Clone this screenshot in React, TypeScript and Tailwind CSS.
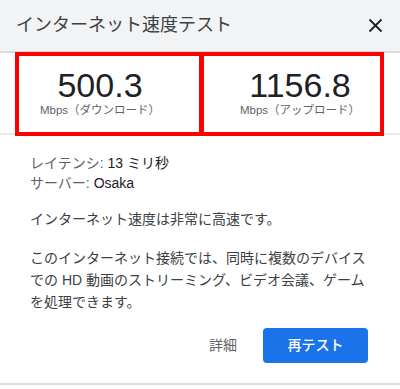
import React from 'react';

const font = { fontFamily: '"Liberation Sans", "Noto Sans CJK JP", sans-serif' };

function SpeedCell({ value, label }: { value: string; label: string }) {
  return (
    <div className="flex flex-col items-center pt-[15px]">
      <div className="text-[34px] leading-[34px] text-[#202124]">{value}</div>
      <div className="mt-[1px] text-[11.5px] leading-[14px] text-[#5f6368]">{label}</div>
    </div>
  );
}

export default function App() {
  return (
    <div className="w-[400px] h-[389px] bg-white" style={font}>
      <div className="h-[385px] border-b-2 border-[#dadce0]">
        <header className="h-[53px] bg-[#f1f3f4] border-b-2 border-[#dadce0] flex items-center justify-between pl-4 pr-[17px]">
          <h1 className="text-[18px] text-[#3c4043]">インターネット速度テスト</h1>
          <svg width="15" height="15" viewBox="0 0 15 15" className="text-[#202124]">
            <path d="M1.5 1.5 L13.5 13.5 M13.5 1.5 L1.5 13.5" stroke="currentColor" strokeWidth="1.8" />
          </svg>
        </header>

        <section className="relative h-[82px] border-b-2 border-[#e8eaed] grid grid-cols-2">
          <SpeedCell value="500.3" label="Mbps（ダウンロード）" />
          <SpeedCell value="1156.8" label="Mbps（アップロード）" />
          {/* red annotation frames */}
          <div className="absolute -top-[1px] left-[15px] w-[369px] h-[84px] border-4 border-[#ff0000] flex pointer-events-none">
            <div className="w-[180px]" />
            <div className="w-[5px] bg-[#ff0000]" />
            <div className="flex-1" />
          </div>
        </section>

        <div className="px-[30px] pt-[18px] text-[14px] text-[#3c4043]">
          <div className="leading-[20px]">
            <span className="text-[#5f6368]">レイテンシ: </span>
            <span className="text-[#202124]">13 ミリ秒</span>
          </div>
          <div className="leading-[20px]">
            <span className="text-[#5f6368]">サーバー: </span>
            <span className="text-[#202124]">Osaka</span>
          </div>
          <p className="mt-[16px] leading-[20px]">インターネット速度は非常に高速です。</p>
          <p className="mt-[18px] leading-[22px]">
            このインターネット接続では、同時に複数のデバイスでの HD 動画のストリーミング、ビデオ会議、ゲームを処理できます。
          </p>
        </div>

        <div className="mt-[15px] flex items-center justify-end pr-[32px] gap-[26px]">
          <button className="text-[14px] text-[#5f6368]">詳細</button>
          <button className="w-[105px] h-[35px] rounded-[4px] bg-[#1a73e8] text-white text-[14px] font-medium">
            再テスト
          </button>
        </div>
      </div>
    </div>
  );
}
